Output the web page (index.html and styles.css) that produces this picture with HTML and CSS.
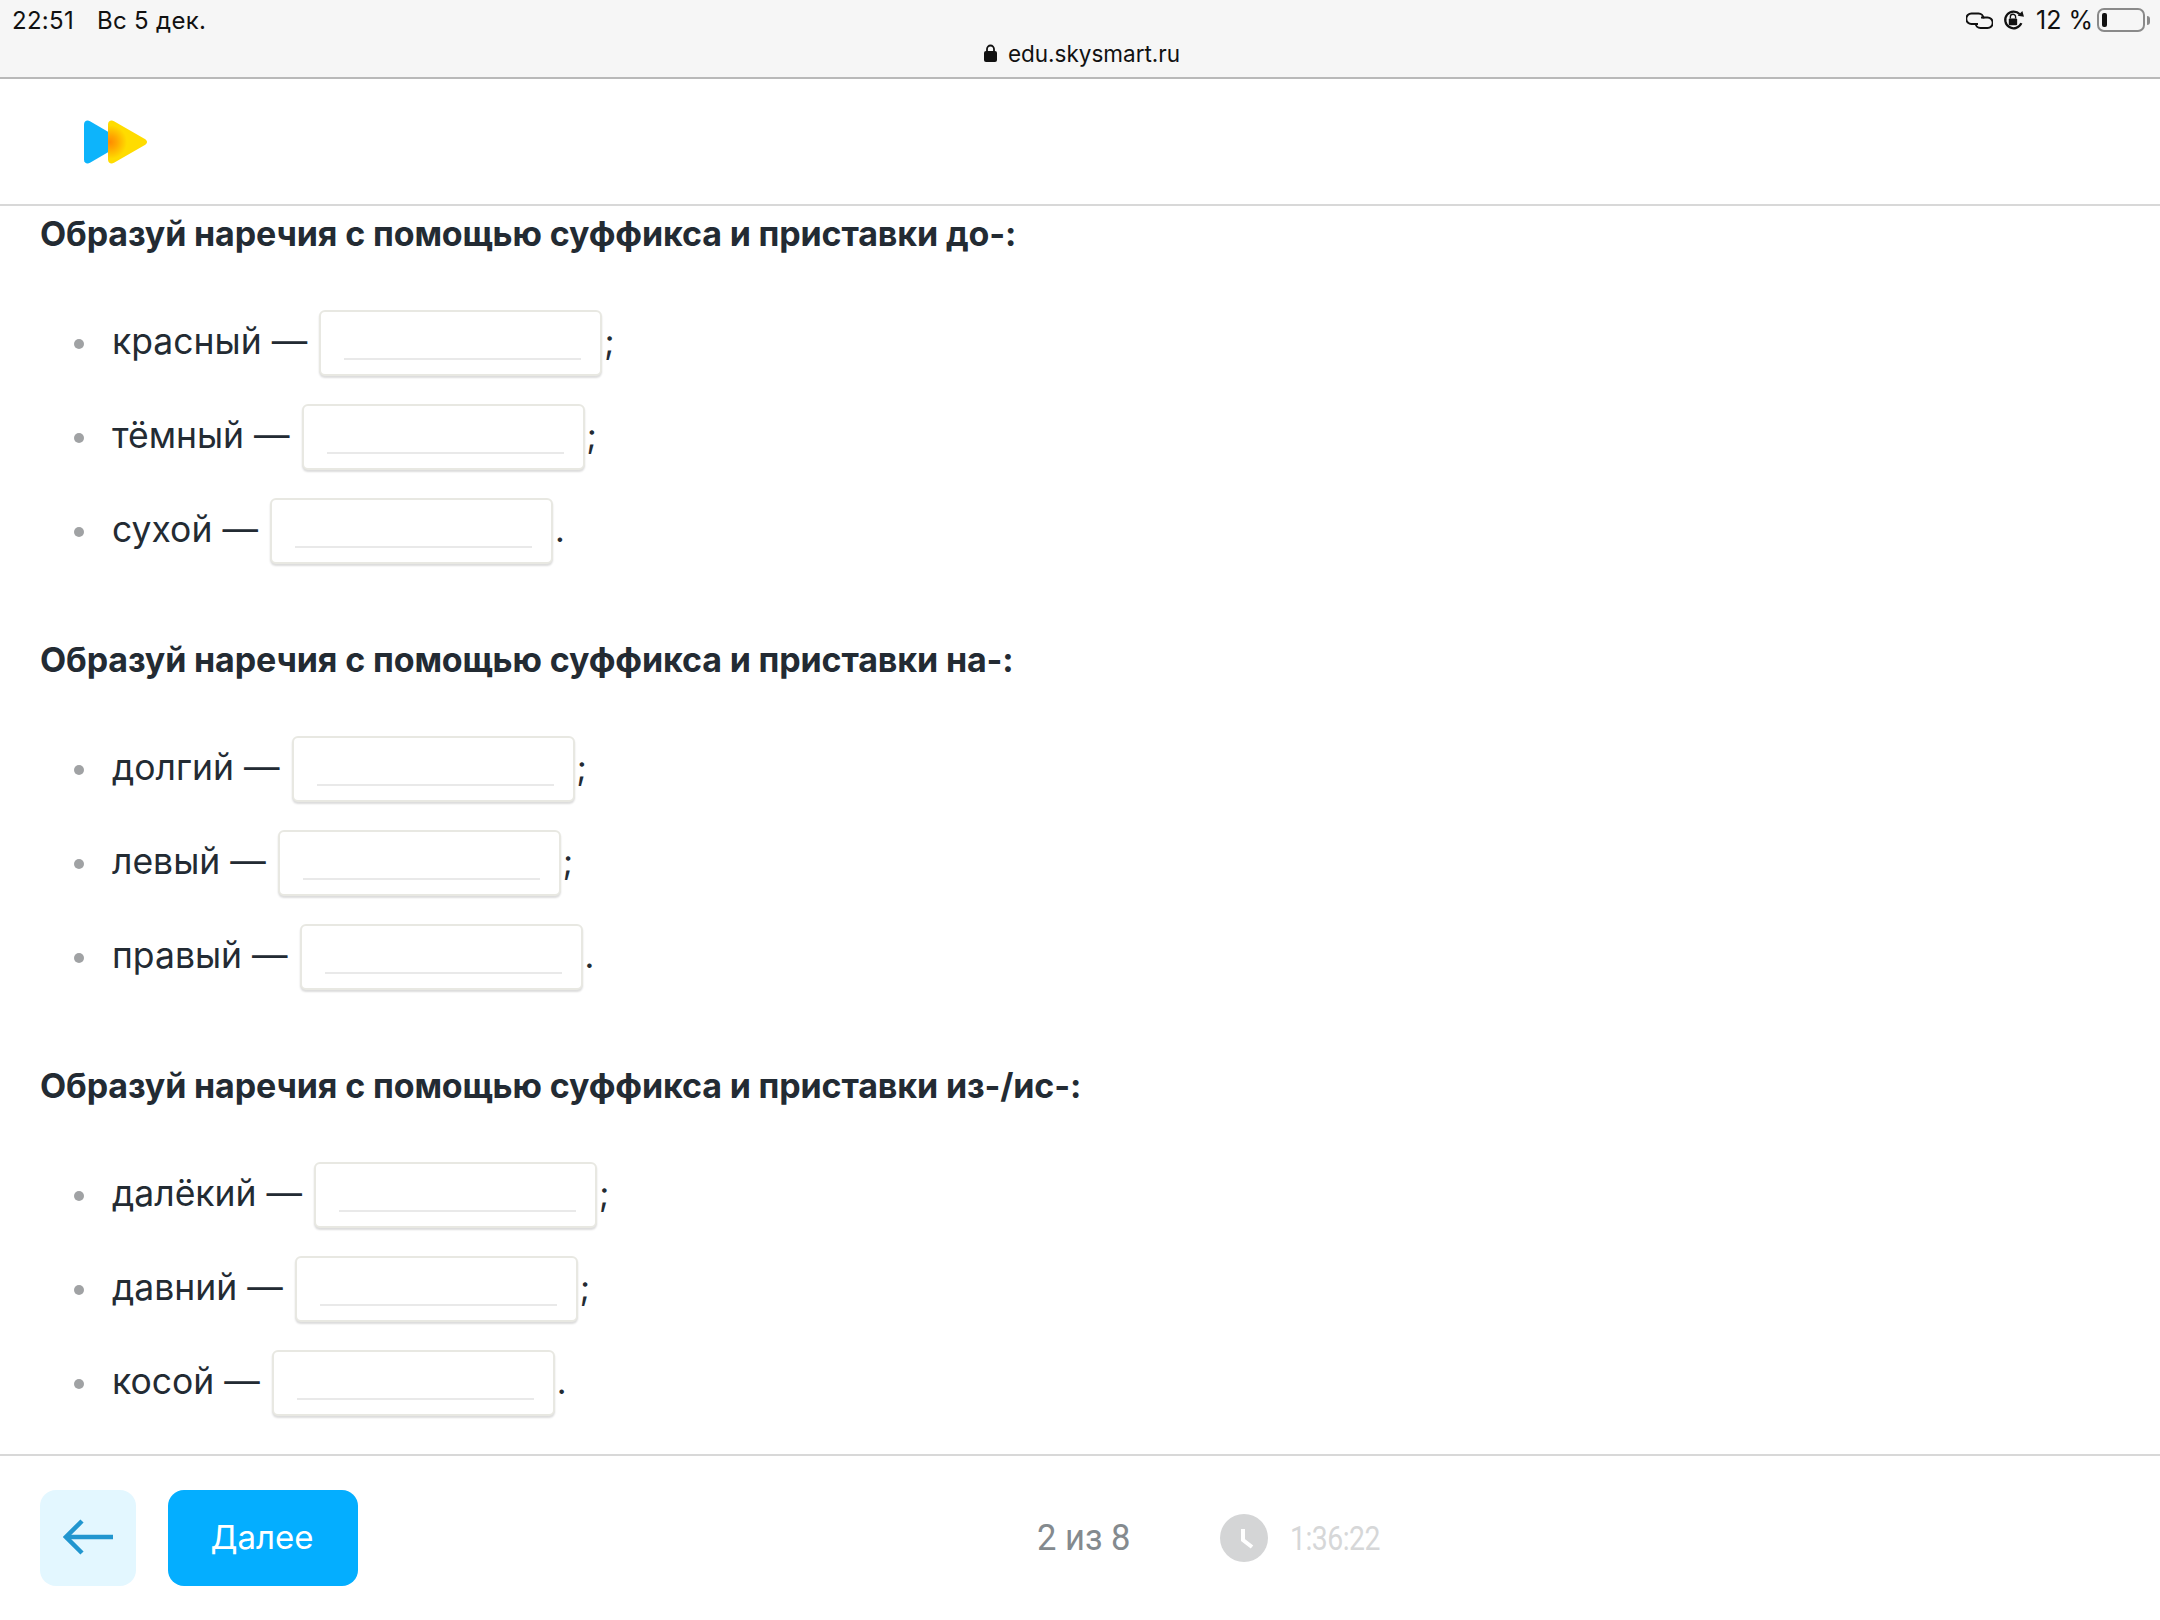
FILE: index.html
```html
<!DOCTYPE html>
<html lang="ru">
<head>
<meta charset="utf-8">
<title>edu.skysmart.ru</title>
<link rel="stylesheet" href="styles.css">
</head>
<body>
<div class="page">
  <div class="statusbar">
    <div class="status-row">
      <div class="status-left"><span>22:51</span><span>Вс 5 дек.</span></div>
      <div class="status-right">
        <svg class="ico-link" width="27" height="17" viewBox="0 0 27 17" fill="none" stroke="#111" stroke-width="2"><path d="M12 12H5.500a5.250 5.250 0 0 1 0-10.500h7a5 5 0 0 1 5 5"/><path d="M15 5.500h6.500a5.250 5.250 0 0 1 0 10.500h-7a5 5 0 0 1-5-5"/></svg>
        <svg class="ico-lock" width="23" height="23" viewBox="0 0 22 22" fill="none"><path d="M18.500 13.500A8 8 0 1 1 17 5" stroke="#111" stroke-width="2.2"/><path d="M15 6.500l6 1-1.500-5.500z" fill="#111"/><rect x="6.500" y="9" width="8" height="6.500" rx="1" fill="#111"/><path d="M8 9V7.500a2.500 2.500 0 0 1 5 0V9" stroke="#111" stroke-width="1.300"/></svg>
        <span class="pct">12 %</span>
        <div class="battery"><div class="battery-fill"></div></div><div class="battery-tip"></div>
      </div>
    </div>
    <div class="url">
      <svg width="13" height="18" viewBox="0 0 13 18"><path d="M3 8V5a3.500 3.500 0 0 1 7 0v3" fill="none" stroke="#111" stroke-width="1.800"/><rect x="0" y="7" width="13" height="11" rx="2" fill="#111"/></svg>
      <span>edu.skysmart.ru</span>
    </div>
  </div>

  <header class="topbar">
    <svg width="63" height="44" viewBox="0 0 63 44">
      <defs>
        <radialGradient id="glow" gradientUnits="userSpaceOnUse" cx="26" cy="22" r="17">
          <stop offset="0" stop-color="#ff8c00"/>
          <stop offset="0.4" stop-color="#ffa800"/>
          <stop offset="1" stop-color="#ffdc00"/>
        </radialGradient>
      </defs>
      <path d="M0 4.500C0 1.200 3 -.5 6 1.200L33 17c4 2.500 4 7.500 0 10L6 42.800C3 44.500 0 42.800 0 39.500z" fill="#0db4fb"/>
      <path d="M24 4.500C24 1.200 27 -.5 30 1.200L60 18.500c4 2 4 5 0 7L30 42.800c-3 1.700-6 0-6-3.300z" fill="url(#glow)"/>
    </svg>
  </header>

  <main class="content">
    <section class="task">
      <h2>Образуй наречия с помощью суффикса и приставки до-:</h2>
      <ul>
        <li><span class="word">красный —</span><span class="field"></span><span class="end">;</span></li>
        <li><span class="word">тёмный —</span><span class="field"></span><span class="end">;</span></li>
        <li><span class="word">сухой —</span><span class="field"></span><span class="end">.</span></li>
      </ul>
    </section>
    <section class="task">
      <h2>Образуй наречия с помощью суффикса и приставки на-:</h2>
      <ul>
        <li><span class="word">долгий —</span><span class="field"></span><span class="end">;</span></li>
        <li><span class="word">левый —</span><span class="field"></span><span class="end">;</span></li>
        <li><span class="word">правый —</span><span class="field"></span><span class="end">.</span></li>
      </ul>
    </section>
    <section class="task">
      <h2>Образуй наречия с помощью суффикса и приставки из-/ис-:</h2>
      <ul>
        <li><span class="word">далёкий —</span><span class="field"></span><span class="end">;</span></li>
        <li><span class="word">давний —</span><span class="field"></span><span class="end">;</span></li>
        <li><span class="word">косой —</span><span class="field"></span><span class="end">.</span></li>
      </ul>
    </section>
  </main>

  <footer class="footer">
    <div class="footer-buttons">
      <button class="back" type="button" aria-label="Назад">
        <svg width="50" height="36" viewBox="0 0 50 36" fill="none" stroke="#2196cf" stroke-width="4.500"><path d="M50 18H3"/><path d="M19 2L3 18l16 16"/></svg>
      </button>
      <button class="next" type="button">Далее</button>
    </div>
    <div class="progress"><span class="narrow-progress">2 из 8</span></div>
    <div class="timer">
      <svg width="48" height="48" viewBox="0 0 48 48"><circle cx="24" cy="24" r="24" fill="#d4d5d6"/><path d="M23 15v11l9 7" fill="none" stroke="#fff" stroke-width="4"/></svg>
      <span class="narrow-timer">1:36:22</span>
    </div>
  </footer>
</div>
</body>
</html>
```

FILE: styles.css
```css
* { box-sizing: border-box; }
html, body { margin: 0; padding: 0; background: #fff; }
body { font-family: "Inter", "Liberation Sans", sans-serif; color: #232b33; }
.page { width: 2160px; height: 1620px; display: flex; flex-direction: column; overflow: hidden; }

.statusbar { flex: none; height: 79px; background: #f6f6f6; border-bottom: 2px solid #b9b9b9; display: flex; flex-direction: column; color: #111; font-size: 24px; }
.status-row { display: flex; justify-content: space-between; align-items: center; height: 40px; padding: 0 10px 0 12px; }
.status-left { display: flex; gap: 23px; letter-spacing: .3px; }
.status-right { display: flex; align-items: center; }
.ico-link { margin-right: 9px; }
.ico-lock { margin-right: 11px; }
.pct { margin-right: 4px; font-size: 25px; }
.battery { width: 48px; height: 24px; border: 2.5px solid #8a8a8a; border-radius: 7px; padding: 3px; }
.battery-fill { width: 5px; height: 100%; background: #111; border-radius: 2px; }
.battery-tip { width: 3px; height: 9px; background: #8a8a8a; border-radius: 0 3px 3px 0; margin-left: 2px; }
.url { display: flex; justify-content: center; align-items: center; gap: 11px; height: 26px; font-size: 22.5px; padding-left: 4px; }

.topbar { flex: none; height: 127px; border-bottom: 2px solid #d8d8d8; padding: 41px 0 0 84px; }
.topbar svg { display: block; }

.content { flex: 1; min-height: 0; overflow: hidden; padding: 6px 40px 0; display: flex; flex-direction: column; gap: 74px; }
.task h2 { margin: 0; font-size: 34px; line-height: 44px; font-weight: 700; letter-spacing: -.14px; color: #232b33; }
.task ul { list-style: none; margin: 54px 0 0; padding: 0; display: flex; flex-direction: column; gap: 28px; }
.task li { display: flex; align-items: center; height: 66px; font-size: 35.5px; padding-left: 72px; position: relative; }
.task li::before { content: ""; position: absolute; left: 34px; top: 29px; width: 10px; height: 10px; border-radius: 50%; background: #a0a2a4; }
.word { margin-bottom: 3px; }
.field { width: 283px; height: 66px; margin-left: 12px; margin-right: 2px; background: #fff; border: 2px solid #e8e8e2; border-radius: 6px; box-shadow: 0 2px 2px rgba(0,0,0,.14); position: relative; flex: none; }
.field::after { content: ""; position: absolute; left: 23px; right: 19px; bottom: 14px; height: 2px; background: #e9e9e9; }
.end { font-size: 34px; margin-bottom: 3px; }

.footer { height: 166px; flex: none; border-top: 2px solid #d8d8d8; display: flex; align-items: center; padding: 0 0 0 40px; }
.footer-buttons { display: flex; gap: 32px; width: 997px; }
button { border: 0; padding: 0; font-family: inherit; }
.back { width: 96px; height: 96px; border-radius: 16px; background: #e3f7ff; display: flex; align-items: center; justify-content: center; padding-bottom: 2px; }
.next { width: 190px; height: 96px; border-radius: 16px; background: #04aeff; color: #fff; font-size: 33px; padding: 0 2px 3px 0; }
.progress { width: 183px; font-family: "Roboto", sans-serif; font-size: 36px; color: #848a8e; }
.narrow-progress { display: inline-block; transform: scaleX(.96); transform-origin: left center; }
.timer { display: flex; align-items: center; gap: 22px; color: #d6d7d8; font-family: "Roboto", sans-serif; font-size: 33px; letter-spacing: -.6px; }
.narrow-timer { display: inline-block; transform: scaleX(.86); transform-origin: left center; }
```
